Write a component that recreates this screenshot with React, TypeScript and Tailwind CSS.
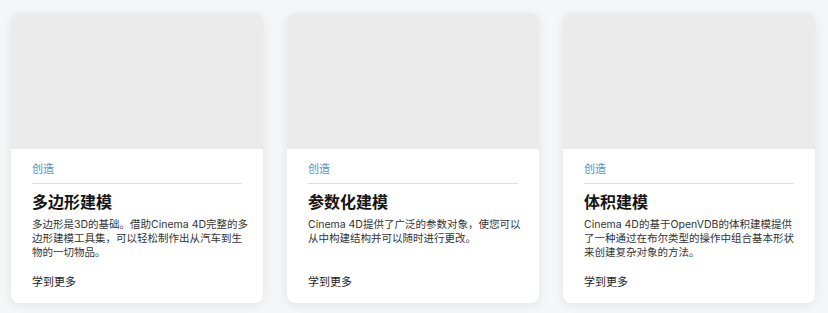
import React from "react";

const cards = [
  {
    title: "多边形建模",
    desc: "多边形是3D的基础。借助Cinema 4D完整的多边形建模工具集，可以轻松制作出从汽车到生物的一切物品。",
  },
  {
    title: "参数化建模",
    desc: "Cinema 4D提供了广泛的参数对象，使您可以从中构建结构并可以随时进行更改。",
  },
  {
    title: "体积建模",
    desc: "Cinema 4D的基于OpenVDB的体积建模提供了一种通过在布尔类型的操作中组合基本形状来创建复杂对象的方法。",
  },
];

function Card({ title, desc }: { title: string; desc: string }) {
  return (
    <div className="flex h-[290px] w-[252px] flex-col overflow-hidden rounded-[8px] bg-white shadow-[0_2px_10px_rgba(0,0,0,0.08)]">
      <div className="h-[136px] w-full shrink-0 bg-[#ebebeb]" />
      <div className="flex flex-1 flex-col px-[21px] pb-[14px] pt-[13px]">
        <div className="text-[11px] leading-[14px] text-[#5a8dc8]">创造</div>
        <div className="mt-[7px] h-px w-full bg-[#dcdfe4]" />
        <div className="mt-[8px] text-[16px] font-bold leading-[20px] text-[#151515]">{title}</div>
        <p className="mr-[-8px] mt-[6px] text-[10.5px] leading-[14.2px] text-[#333]">{desc}</p>
        <div className="mt-auto text-[11px] leading-[14px] text-[#222]">学到更多</div>
      </div>
    </div>
  );
}

export default function App() {
  return (
    <div
      className="h-[313px] w-[828px] overflow-hidden bg-[#f5f6f8]"
      style={{ fontFamily: 'Inter, "Noto Sans CJK SC", sans-serif' }}
    >
      <div className="mt-[-301px] grid grid-cols-[252px_252px_252px] gap-x-[24px] gap-y-[24px] pl-[11px]">
        {[0, 1, 2].map((i) => (
          <div
            key={"p" + i}
            className="h-[290px] w-[252px] rounded-[8px] bg-white shadow-[0_2px_10px_rgba(0,0,0,0.08)]"
          />
        ))}
        {cards.map((c, i) => (
          <Card key={i} title={c.title} desc={c.desc} />
        ))}
      </div>
    </div>
  );
}
